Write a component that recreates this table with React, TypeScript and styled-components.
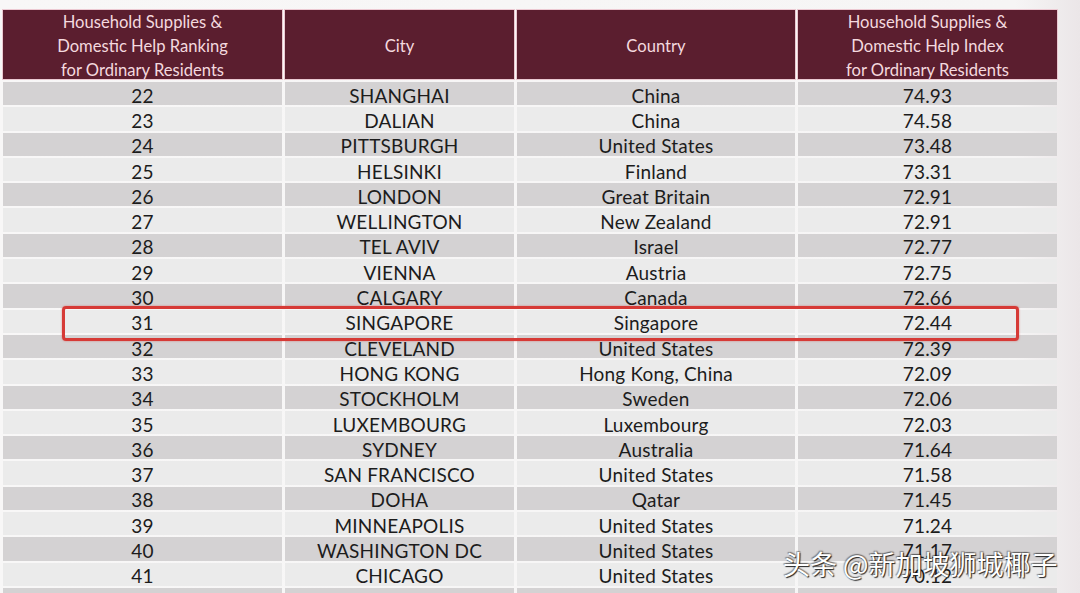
import styled, { createGlobalStyle } from "styled-components";

type Row = {
    rank: string;
    city: string;
    country: string;
    index: string;
}

const rows: Row[] = [
    { rank: "22", city: "SHANGHAI", country: "China", index: "74.93" },
    { rank: "23", city: "DALIAN", country: "China", index: "74.58" },
    { rank: "24", city: "PITTSBURGH", country: "United States", index: "73.48" },
    { rank: "25", city: "HELSINKI", country: "Finland", index: "73.31" },
    { rank: "26", city: "LONDON", country: "Great Britain", index: "72.91" },
    { rank: "27", city: "WELLINGTON", country: "New Zealand", index: "72.91" },
    { rank: "28", city: "TEL AVIV", country: "Israel", index: "72.77" },
    { rank: "29", city: "VIENNA", country: "Austria", index: "72.75" },
    { rank: "30", city: "CALGARY", country: "Canada", index: "72.66" },
    { rank: "31", city: "SINGAPORE", country: "Singapore", index: "72.44" },
    { rank: "32", city: "CLEVELAND", country: "United States", index: "72.39" },
    { rank: "33", city: "HONG KONG", country: "Hong Kong, China", index: "72.09" },
    { rank: "34", city: "STOCKHOLM", country: "Sweden", index: "72.06" },
    { rank: "35", city: "LUXEMBOURG", country: "Luxembourg", index: "72.03" },
    { rank: "36", city: "SYDNEY", country: "Australia", index: "71.64" },
    { rank: "37", city: "SAN FRANCISCO", country: "United States", index: "71.58" },
    { rank: "38", city: "DOHA", country: "Qatar", index: "71.45" },
    { rank: "39", city: "MINNEAPOLIS", country: "United States", index: "71.24" },
    { rank: "40", city: "WASHINGTON DC", country: "United States", index: "71.17" },
    { rank: "41", city: "CHICAGO", country: "United States", index: "70.12" },
    // next row is cut off at the bottom edge
    { rank: "", city: "", country: "", index: "" },
];

const GlobalStyle = createGlobalStyle`
    html, body {
        margin: 0;
        padding: 0;
        overflow: hidden;
        background: #f6f4f5;
    }
`;

export default function App() {
    return (
        <>
            <GlobalStyle />
            <Slide>
                <Table>
                    <HeadCell>
                        Household Supplies &amp;<br />
                        Domestic Help Ranking<br />
                        for Ordinary Residents
                    </HeadCell>
                    <HeadCell>City</HeadCell>
                    <HeadCell>Country</HeadCell>
                    <HeadCell>
                        Household Supplies &amp;<br />
                        Domestic Help Index<br />
                        for Ordinary Residents
                    </HeadCell>
                    {rows.map((row, i) => (
                        <DataRow key={i} $dark={i % 2 === 0}>
                            <Cell>{row.rank}</Cell>
                            <Cell>{row.city}</Cell>
                            <Cell>{row.country}</Cell>
                            <Cell>{row.index}</Cell>
                        </DataRow>
                    ))}
                </Table>
                <Highlight />
                <Watermark>头条 @新加坡狮城椰子</Watermark>
            </Slide>
        </>
    )
}

const Slide = styled.div`
    position: relative;
    width: 1080px;
    height: 593px;
    padding: 10px 0 0 3px;
    box-sizing: border-box;
    background: linear-gradient(90deg, #f8f7f7 0%, #f6f5f5 94%, #ebe6e8 100%);
    font-family: Lato, "Open Sans", sans-serif;
`;

const Table = styled.div`
    display: grid;
    grid-template-columns: 279px 229px 278px 259px;
    grid-template-rows: 70px;
    grid-auto-rows: 23.3px;
    column-gap: 3px;
    row-gap: 2px;
    width: 1053px;
`;

const HeadCell = styled.div`
    grid-row: 1;
    align-self: start;
    height: 69px;
    display: flex;
    align-items: center;
    justify-content: center;
    text-align: center;
    background: #5b1e2f;
    box-shadow: 0 0 0 1px #ecc9d2;
    color: #f4d9df;
    font-size: 16.6px;
    line-height: 24px;
    padding-top: 3px;
    box-sizing: border-box;
`;

const DataRow = styled.div<{ $dark: boolean }>`
    display: contents;

    & > div {
        background: ${({ $dark }) => ($dark ? "#d4d2d3" : "#ebebeb")};
    }
`;

const Cell = styled.div`
    display: flex;
    align-items: center;
    justify-content: center;
    padding-top: 3px;
    box-sizing: border-box;
    color: #1c1c1c;
    font-size: 19px;
    letter-spacing: 0.2px;
    white-space: nowrap;
`;

const Highlight = styled.div`
    position: absolute;
    left: 62px;
    top: 306px;
    width: 957px;
    height: 35px;
    box-sizing: border-box;
    border: 3px solid #d63a36;
    border-radius: 4px;
    box-shadow: 0 0 2px rgba(214, 58, 54, 0.6);
`;

const Watermark = styled.div`
    position: absolute;
    left: 783px;
    top: 544px;
    color: #ffffff;
    font-family: "Noto Sans CJK SC", sans-serif;
    font-size: 27px;
    text-shadow: 1px 1px 1px #222, -1px -1px 1px rgba(0, 0, 0, 0.35), 1px -1px 1px rgba(0, 0, 0, 0.35);
    white-space: nowrap;
`;
